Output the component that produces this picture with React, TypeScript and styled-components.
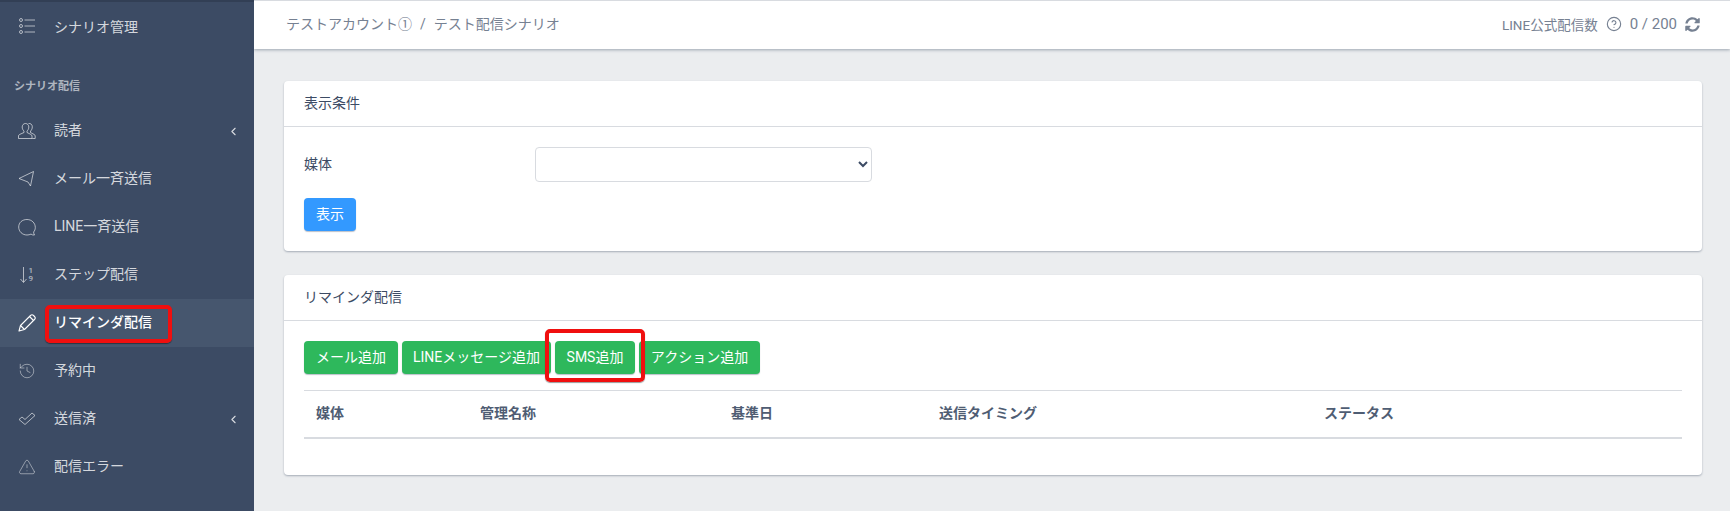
import React from 'react'
import styled, { createGlobalStyle } from 'styled-components'
import { ChevronLeft, CircleHelp, History, TriangleAlert } from 'lucide-react'
import { FaSyncAlt } from 'react-icons/fa'

const GlobalStyle = createGlobalStyle`
  html, body { margin: 0; padding: 0; height: 100%; overflow: hidden; }
  body {
    background: #ebedef;
    color: #4f5d73;
    font-family: Roboto, "Noto Sans CJK JP", sans-serif;
    font-size: 14px;
  }
  * { box-sizing: border-box; }
`

const Page = styled.div`
  display: flex;
  height: 511px;
`

const Sidebar = styled.nav`
  width: 254px;
  flex: none;
  background: #3c4b64;
  border-top: 2px solid #323f55;
  color: rgba(255, 255, 255, 0.8);
`

const NavItem = styled.div<{ $active?: boolean }>`
  height: 48px;
  display: flex;
  align-items: center;
  padding: 0 14px 0 18px;
  background: ${p => (p.$active ? '#46566e' : 'transparent')};
  color: ${p => (p.$active ? '#fff' : 'rgba(255, 255, 255, 0.8)')};
  font-weight: ${p => (p.$active ? 500 : 400)};
`

const NavIcon = styled.span<{ $active?: boolean }>`
  width: 18px;
  height: 18px;
  margin-right: 18px;
  flex: none;
  display: flex;
  align-items: center;
  justify-content: center;
  color: ${p => (p.$active ? '#fff' : 'rgba(255, 255, 255, 0.6)')};
`

const NavLabel = styled.span<{ $marked?: boolean; $flat?: boolean }>`
  position: relative;
  flex: 1;
  padding-bottom: ${p => (p.$flat ? 0 : 4)}px;
  ${p =>
    p.$marked &&
    `
    &::after {
      content: '';
      box-sizing: border-box;
      position: absolute;
      left: -9px;
      top: -6px;
      width: 127px;
      height: 38px;
      border: 4px solid #f00f0f;
      border-radius: 5px;
      box-shadow: 0 1px 1px rgba(0, 0, 0, 0.4);
    }
  `}
`

const NavTitle = styled.div`
  height: 57px;
  padding: 30px 14px 0;
  font-size: 11px;
  font-weight: 700;
  line-height: 14px;
  color: rgba(255, 255, 255, 0.6);
`

const Main = styled.div`
  flex: 1;
  min-width: 0;
`

const Header = styled.header`
  height: 49px;
  border-top: 1px solid #d8dbe0;
  background: #fff;
  display: flex;
  align-items: center;
  justify-content: space-between;
  padding: 0 30px 0 32px;
  box-shadow: 0 1px 3px rgba(60, 75, 100, 0.45);
  color: #768192;
`

const Crumbs = styled.div`
  padding-bottom: 4px;
`

const CrumbDivider = styled.span`
  margin: 0 8px;
`

const Quota = styled.div`
  display: flex;
  align-items: center;
  gap: 8px;
  font-size: 13.5px;
  padding-bottom: 2px;
`

const QuotaCount = styled.span`
  font-size: 15px;
`

const Content = styled.main`
  padding: 32px 28px 0 30px;
  display: flex;
  flex-direction: column;
  gap: 24px;
`

const Card = styled.section`
  background: #fff;
  border-radius: 4px;
  box-shadow: 0 1px 2px rgba(60, 75, 100, 0.4);
`

const CardHeader = styled.div`
  height: 46px;
  padding: 0 20px 4px;
  display: flex;
  align-items: center;
  color: #3c4b64;
  border-bottom: 1px solid #d8dbe0;
`

const CardBody = styled.div`
  padding: 20px;
`

const FormRow = styled.div`
  display: flex;
  align-items: center;
  height: 35px;
  margin-bottom: 16px;
`

const FieldLabel = styled.label`
  width: 231px;
  padding-bottom: 4px;
  color: #3c4b64;
`

const Select = styled.select`
  width: 337px;
  height: 35px;
  background: #fff;
  border: 1px solid #d8dbe0;
  border-radius: 4px;
  font: inherit;
  color: #3c4b64;
`

const Button = styled.button<{ $tone: 'blue' | 'green'; $wide: number }>`
  display: block;
  height: 33px;
  width: ${p => p.$wide}px;
  padding: 0 0 3px;
  border: 0;
  border-radius: 4px;
  color: #fff;
  font: inherit;
  white-space: nowrap;
  background: ${p => (p.$tone === 'blue' ? '#3399ff' : '#2eb85c')};
  box-shadow: 0 1px 1px rgba(60, 75, 100, 0.35);
`

const ButtonRow = styled.div`
  display: flex;
  gap: 4px;
`

const MarkedButton = styled.span`
  position: relative;
  display: block;

  &::after {
    content: '';
    box-sizing: border-box;
    position: absolute;
    left: -10px;
    top: -12px;
    width: 100px;
    height: 53px;
    border: 4px solid #f00f0f;
    border-radius: 5px;
    box-shadow: 0 1px 1px rgba(0, 0, 0, 0.4);
  }
`

const Table = styled.table`
  width: 100%;
  margin: 16px 0 16px;
  border-collapse: collapse;
  table-layout: fixed;
`

const Th = styled.th<{ $w?: number }>`
  width: ${p => (p.$w ? `${p.$w}px` : 'auto')};
  height: 47px;
  padding: 0 12px 4px;
  text-align: left;
  font-weight: 700;
  color: #4f5d73;
  border-top: 1px solid #d8dbe0;
  border-bottom: 2px solid #d8dbe0;
`

const ListIcon = () => (
  <svg width="18" height="18" viewBox="0 0 18 18" fill="none" stroke="currentColor" strokeWidth="1">
    <circle cx="3" cy="3" r="1.500" />
    <circle cx="3" cy="9" r="1.500" />
    <circle cx="3" cy="15" r="1.500" />
    <path d="M6.500 3H17M6.500 9H17M6.500 15H17" />
  </svg>
)

const PeopleIcon = () => (
  <svg width="18" height="18" viewBox="0 0 18 18" fill="none" stroke="currentColor" strokeWidth="1" strokeLinejoin="round">
    <path d="M7.500 1.500c-2 0-3.300 1.500-3.300 3.500 0 1.600.7 3.200 1.800 4v1.500L1.500 12.500c-.6.300-1 .9-1 1.500v2.500h13.500V14c0-.6-.4-1.200-1-1.500L9 10.500V9c1.100-.8 1.800-2.400 1.800-4 0-2-1.300-3.500-3.300-3.500z" />
    <path d="M10.500 1.500c2-.4 3.800 1 3.800 3.300 0 1.700-.6 3.300-1.800 4.200v1.500l3.700 2c.6.300 1 .9 1 1.500v2.500h-3" />
  </svg>
)

const SendIcon = () => (
  <svg width="18" height="18" viewBox="0 0 18 18" fill="none" stroke="currentColor" strokeWidth="1" strokeLinejoin="round">
    <path d="M15.500 1.500 1 8.500l9 3.500 2.500 4z" />
  </svg>
)

const BubbleIcon = () => (
  <svg width="18" height="18" viewBox="0 0 18 18" fill="none" stroke="currentColor" strokeWidth="1" strokeLinejoin="round">
    <path d="M16.500 17c-1.200.2-2.600-.1-3.500-.9-1.200.6-2.600.9-4 .9C4.300 17 .7 13.500.7 9S4.300 1.500 9 1.500 17.300 5 17.300 9.500c0 1.800-.6 3.300-1.700 4.500.1 1 .3 2.300.9 3z" />
  </svg>
)

const StepIcon = () => (
  <svg width="18" height="18" viewBox="0 0 18 18" fill="none" stroke="currentColor" strokeWidth="1">
    <path d="M5.500 1v15M2.500 13l3 3.500 3-3.500" />
    <text x="10.500" y="7" fontSize="8" fontWeight="500" fill="currentColor" stroke="none" fontFamily="Roboto, sans-serif">1</text>
    <text x="10.500" y="15" fontSize="8" fontWeight="500" fill="currentColor" stroke="none" fontFamily="Roboto, sans-serif">9</text>
  </svg>
)

const PencilIcon = () => (
  <svg width="18" height="18" viewBox="0 0 18 18" fill="none" stroke="currentColor" strokeWidth="1.100" strokeLinejoin="round">
    <path d="M1 17 2.500 11.500 12.500 1.500c.8-.8 2.200-.8 3 0l1 1c.8.800.8 2.200 0 3L6.500 15.500z" />
    <path d="M2.500 11.500l4 4M11.500 2.500l4 4" />
  </svg>
)

const CheckIcon = () => (
  <svg width="18" height="18" viewBox="0 0 18 18" fill="none" stroke="currentColor" strokeWidth="1" strokeLinejoin="round">
    <path d="M1 9.500 4 7l3 2.500L14 3l3 2.500L7 14.500z" />
  </svg>
)

const navItems = [
  { label: '読者', icon: <PeopleIcon />, more: true },
  { label: 'メール一斉送信', icon: <SendIcon /> },
  { label: 'LINE一斉送信', icon: <BubbleIcon /> },
  { label: 'ステップ配信', icon: <StepIcon /> },
  { label: 'リマインダ配信', icon: <PencilIcon />, active: true },
  { label: '予約中', icon: <History size={20} strokeWidth={1} /> },
  { label: '送信済', icon: <CheckIcon />, more: true },
  { label: '配信エラー', icon: <TriangleAlert size={20} strokeWidth={1} /> },
]

const columns = [
  { label: '媒体', width: 164 },
  { label: '管理名称', width: 251 },
  { label: '基準日', width: 208 },
  { label: '送信タイミング', width: 385 },
  { label: 'ステータス' },
]

export default function App() {
  return (
    <Page>
      <GlobalStyle />
      <Sidebar>
        <NavItem>
          <NavIcon><ListIcon /></NavIcon>
          <NavLabel $flat>シナリオ管理</NavLabel>
        </NavItem>
        <NavTitle>シナリオ配信</NavTitle>
        {navItems.map(item => (
          <NavItem key={item.label} $active={item.active}>
            <NavIcon $active={item.active}>{item.icon}</NavIcon>
            <NavLabel $marked={item.active}>{item.label}</NavLabel>
            {item.more && <ChevronLeft size={13} strokeWidth={2} />}
          </NavItem>
        ))}
      </Sidebar>
      <Main>
        <Header>
          <Crumbs>
            テストアカウント①
            <CrumbDivider>/</CrumbDivider>
            テスト配信シナリオ
          </Crumbs>
          <Quota>
            LINE公式配信数
            <CircleHelp size={16} strokeWidth={1.700} />
            <QuotaCount>0 / 200</QuotaCount>
            <FaSyncAlt size={15} />
          </Quota>
        </Header>
        <Content>
          <Card>
            <CardHeader>表示条件</CardHeader>
            <CardBody>
              <FormRow>
                <FieldLabel>媒体</FieldLabel>
                <Select><option></option></Select>
              </FormRow>
              <Button $tone="blue" $wide={52}>表示</Button>
            </CardBody>
          </Card>
          <Card>
            <CardHeader>リマインダ配信</CardHeader>
            <CardBody>
              <ButtonRow>
                <Button $tone="green" $wide={94}>メール追加</Button>
                <Button $tone="green" $wide={149}>LINEメッセージ追加</Button>
                <MarkedButton><Button $tone="green" $wide={80}>SMS追加</Button></MarkedButton>
                <Button $tone="green" $wide={121}>アクション追加</Button>
              </ButtonRow>
              <Table>
                <thead>
                  <tr>
                    {columns.map(c => <Th key={c.label} $w={c.width}>{c.label}</Th>)}
                  </tr>
                </thead>
              </Table>
            </CardBody>
          </Card>
        </Content>
      </Main>
    </Page>
  )
}
